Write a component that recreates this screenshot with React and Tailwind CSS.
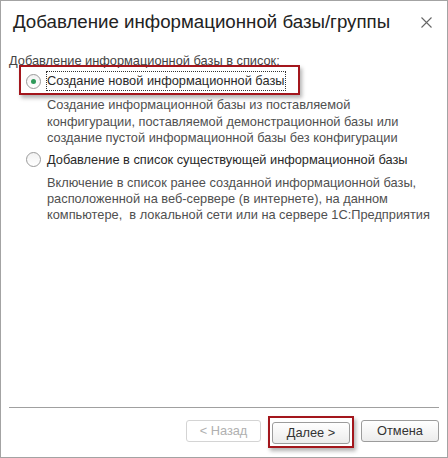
import React from "react";

const Radio = ({ checked }) => (
    <span className="flex h-[15px] w-[15px] shrink-0 items-center justify-center rounded-full border border-[#9a9a9a] bg-gradient-to-b from-[#f2f2f2] to-white">
        {checked && <span className="h-[5px] w-[5px] rounded-full bg-[#2f9a5a]" />}
    </span>
);

const Button = ({ children, disabled }) => (
    <button
        className={
            disabled
                ? "h-[22px] w-[75px] rounded-[3px] border border-[#d4d4d4] bg-white text-[12.8px] text-[#b0b0b0]"
                : "h-[22px] w-[78px] rounded-[3px] border border-[#9c9c9c] bg-gradient-to-b from-white to-[#ececec] text-[12.8px] text-[#333]"
        }
    >
        {children}
    </button>
);

export default function App() {
    return (
        <div className="flex h-[458px] w-[448px] flex-col border border-[#a3a3a3] bg-white font-['Liberation_Sans',Arial,sans-serif] text-[#333]">
            <div className="flex items-center justify-between pl-[12px] pr-[15px] pt-[8px]">
                <h1 className="text-[18.7px] leading-[26px] text-[#222]">Добавление информационной базы/группы</h1>
                <svg width="11" height="11" viewBox="0 0 11 11" className="mt-[1px]">
                    <path d="M0.5 0.5 L10.5 10.5 M10.5 0.5 L0.5 10.5" stroke="#666" strokeWidth="1.1" />
                </svg>
            </div>

            <div className="pl-[8px] pt-[18px] text-[12.8px] leading-[16px]">
                <div className="text-[#444]">Добавление информационной базы в список:</div>

                <div className="relative mt-[2px] flex items-center gap-[5px] pl-[17px]">
                    <span className="pointer-events-none absolute -top-[6px] left-[10px] h-[30px] w-[281px] border-2 border-[#a3161c] shadow-[2px_3px_4px_rgba(0,0,0,0.3)]" />
                    <Radio checked />
                    <span className="border border-dotted border-[#333] pr-[1px] leading-[18px] text-[#2a2a2a]">
                        Создание новой информационной базы
                    </span>
                </div>
                <div className="mt-[6px] pl-[38px] leading-[16.5px] text-[#505050]">
                    Создание информационной базы из поставляемой
                    <br />
                    конфигурации, поставляемой демонстрационной базы или
                    <br />
                    создание пустой информационной базы без конфигурации
                </div>

                <div className="mt-[4px] flex items-center gap-[6px] pl-[17px]">
                    <Radio />
                    <span className="leading-[18px] text-[#2a2a2a]">Добавление в список существующей информационной базы</span>
                </div>
                <div className="mt-[6px] pl-[38px] leading-[16px] text-[#505050]">
                    Включение в список ранее созданной информационной базы,
                    <br />
                    расположенной на веб-сервере (в интернете), на данном
                    <br />
                    компьютере,&nbsp; в локальной сети или на сервере 1С:Предприятия
                </div>
            </div>

            <div className="flex-1" />

            <div className="mx-[8px] border-t border-[#a0a0a0]" />
            <div className="flex justify-end gap-[11px] pb-[13px] pr-[8px] pt-[12px]">
                <Button disabled>&lt; Назад</Button>
                <div className="relative">
                    <span className="pointer-events-none absolute -inset-[4px] border-2 border-[#a3161c] shadow-[2px_3px_4px_rgba(0,0,0,0.3)]" />
                    <Button>Далее &gt;</Button>
                </div>
                <Button>Отмена</Button>
            </div>
        </div>
    );
}
